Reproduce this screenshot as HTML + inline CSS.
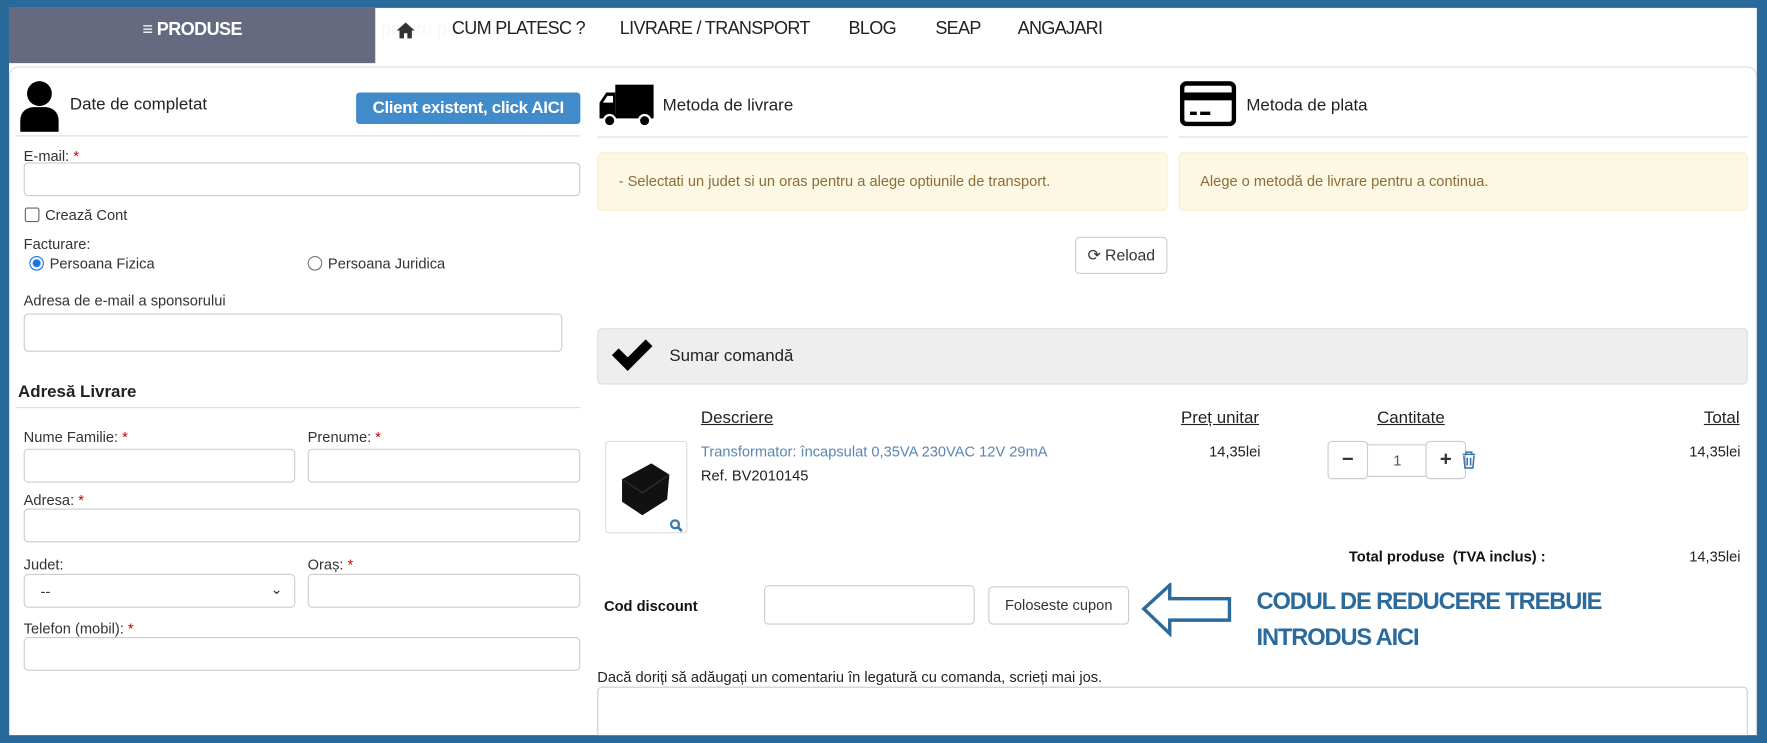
<!DOCTYPE html>
<html><head><meta charset="utf-8"><style>
*{box-sizing:border-box;margin:0;padding:0}
html,body{width:1767px;height:743px;overflow:hidden;background:#2a6a9b}
.root{position:absolute;left:0;top:0;width:1568px;height:659px;background:#2a6a9b;transform:scale(1.1269,1.1275);transform-origin:0 0;font-family:"Liberation Sans",Arial,sans-serif;font-size:13px;color:#333;overflow:hidden}
.in{position:absolute;left:8px;top:7px;width:1551px;height:645px;background:#fff;overflow:hidden}
.a{position:absolute}
.nav{font-size:16px;color:#222;letter-spacing:-0.6px}
.inp{position:absolute;border:1px solid #ccc;border-radius:4px;background:#fff;height:30px}
.lbl{position:absolute;font-size:13px;color:#333}
.req{color:#c00}
.hr{position:absolute;height:1px;background:#ddd}
.warn{position:absolute;background:#fcf8e3;border:1px solid #faebcc;border-radius:4px;color:#8a6d3b;font-size:13px;padding:0 18px}
.btn{position:absolute;border:1px solid #ccc;border-radius:4px;background:#fff;font-size:14px;color:#333;text-align:center}
u{text-decoration:underline}
</style></head><body><div class="root">
<div class="in">
 <div class="a" style="left:0;top:0;width:325px;height:49px;background:#656a80;color:#fff;font-size:16px;font-weight:bold;line-height:40px;text-align:center;letter-spacing:-0.5px">≡ PRODUSE</div>
 <div class="a" style="left:330px;top:11px;font-size:16px;color:#f6f6f6">pentru persoane</div>
 <svg class="a" style="left:343px;top:12px" width="18" height="16" viewBox="0 0 18 16"><path d="M9 1L1 8h2.5v7h4v-4.5h3V15h4V8H17z" fill="#333"/></svg>
 <div class="a nav" style="left:393px;top:10px">CUM PLATESC ?</div>
 <div class="a nav" style="left:542px;top:10px">LIVRARE / TRANSPORT</div>
 <div class="a nav" style="left:745px;top:10px">BLOG</div>
 <div class="a nav" style="left:822px;top:10px">SEAP</div>
 <div class="a nav" style="left:895px;top:10px">ANGAJARI</div>

 <div class="a" style="left:0;top:52px;width:1551px;height:620px;border:1px solid #ddd;border-radius:8px"></div>

 <svg class="a" style="left:8px;top:64px" width="38" height="46" viewBox="0 0 38 46"><circle cx="19" cy="12" r="11" fill="#000"/><path d="M2 46V36c0-8 6-12 12-12h10c6 0 12 4 12 12v10z" fill="#000"/></svg>
 <div class="a" style="left:54px;top:77px;font-size:15px;color:#222">Date de completat</div>
 <div class="a" style="left:308px;top:75px;width:199px;height:28px;background:#428bca;border-radius:3px;color:#fff;font-weight:bold;font-size:15px;line-height:28px;text-align:center;letter-spacing:-0.3px">Client existent, click AICI</div>
 <div class="hr" style="left:6px;top:113px;width:501px"></div>
 <div class="lbl" style="left:13px;top:124px">E-mail: <span class="req">*</span></div>
 <div class="inp" style="left:13px;top:137px;width:494px"></div>
 <div class="a" style="left:14px;top:177px;width:13px;height:13px;border:1px solid #666;border-radius:2px"></div>
 <div class="lbl" style="left:32px;top:176px">Crează Cont</div>
 <div class="lbl" style="left:13px;top:202px">Facturare:</div>
 <div class="a" style="left:18px;top:220px;width:13px;height:13px;border:1px solid #1a73e8;border-radius:50%;background:radial-gradient(#1a73e8 3px,#fff 4px)"></div>
 <div class="lbl" style="left:36px;top:219px">Persoana Fizica</div>
 <div class="a" style="left:265px;top:220px;width:13px;height:13px;border:1px solid #777;border-radius:50%"></div>
 <div class="lbl" style="left:283px;top:219px">Persoana Juridica</div>
 <div class="lbl" style="left:13px;top:252px">Adresa de e-mail a sponsorului</div>
 <div class="inp" style="left:13px;top:271px;width:478px;height:34px"></div>
 <div class="a" style="left:8px;top:332px;font-size:15px;font-weight:bold;color:#222">Adresă Livrare</div>
 <div class="hr" style="left:6px;top:354px;width:501px"></div>
 <div class="lbl" style="left:13px;top:373px">Nume Familie: <span class="req">*</span></div>
 <div class="inp" style="left:13px;top:391px;width:241px"></div>
 <div class="lbl" style="left:265px;top:373px">Prenume: <span class="req">*</span></div>
 <div class="inp" style="left:265px;top:391px;width:242px"></div>
 <div class="lbl" style="left:13px;top:429px">Adresa: <span class="req">*</span></div>
 <div class="inp" style="left:13px;top:444px;width:494px"></div>
 <div class="lbl" style="left:13px;top:486px">Judet:</div>
 <div class="inp" style="left:13px;top:502px;width:241px;padding:7px 14px;font-size:13px">--<span style="position:absolute;right:10px;top:5px">⌄</span></div>
 <div class="lbl" style="left:265px;top:486px">Oraș: <span class="req">*</span></div>
 <div class="inp" style="left:265px;top:502px;width:242px"></div>
 <div class="lbl" style="left:13px;top:543px">Telefon (mobil): <span class="req">*</span></div>
 <div class="inp" style="left:13px;top:558px;width:494px"></div>

 <svg class="a" style="left:524px;top:68px" width="50" height="38" viewBox="0 0 50 38"><rect x="14" y="0" width="34" height="27" fill="#000"/><path d="M0 27V16L6 7h8v20z" fill="#000"/><path d="M3 16L7 10h5v6z" fill="#fff"/><rect x="0" y="26" width="48" height="4" fill="#000"/><circle cx="9" cy="32" r="5" fill="#000" stroke="#fff" stroke-width="2"/><circle cx="40" cy="32" r="5" fill="#000" stroke="#fff" stroke-width="2"/></svg>
 <div class="a" style="left:580px;top:78px;font-size:15px;color:#222">Metoda de livrare</div>
 <div class="hr" style="left:522px;top:114px;width:506px"></div>
 <div class="warn" style="left:522px;top:128px;width:506px;height:52px;line-height:50px">- Selectati un judet si un oras pentru a alege optiunile de transport.</div>
 <svg class="a" style="left:1039px;top:65px" width="50" height="40" viewBox="0 0 50 40"><rect x="2" y="2" width="46" height="36" rx="4" fill="none" stroke="#000" stroke-width="4"/><rect x="2" y="10" width="46" height="7" fill="#000"/><rect x="9" y="27" width="6" height="3" fill="#000"/><rect x="18" y="27" width="9" height="3" fill="#000"/></svg>
 <div class="a" style="left:1098px;top:78px;font-size:15px;color:#222">Metoda de plata</div>
 <div class="hr" style="left:1038px;top:114px;width:505px"></div>
 <div class="warn" style="left:1038px;top:128px;width:505px;height:52px;line-height:50px">Alege o metodă de livrare pentru a continua.</div>
 <div class="btn" style="left:946px;top:203px;width:82px;height:33px;line-height:31px">⟳ Reload</div>

 <div class="a" style="left:522px;top:284px;width:1021px;height:50px;background:#eee;border:1px solid #ddd;border-radius:4px"></div>
 <svg class="a" style="left:533px;top:292px" width="40" height="32" viewBox="0 0 40 32"><path d="M2 16l6-6 8 8L32 2l6 6-22 22z" fill="#000"/></svg>
 <div class="a" style="left:586px;top:300px;font-size:15px;color:#222">Sumar comandă</div>

 <div class="a" style="left:614px;top:355px;font-size:15px;color:#222"><u>Descriere</u></div>
 <div class="a" style="left:1040px;top:355px;font-size:15px;color:#222"><u>Preț unitar</u></div>
 <div class="a" style="left:1214px;top:355px;font-size:15px;color:#222"><u>Cantitate</u></div>
 <div class="a" style="left:1504px;top:355px;font-size:15px;color:#222"><u>Total</u></div>
 <div class="a" style="left:529px;top:384px;width:73px;height:82px;border:1px solid #ddd;border-radius:3px"></div>
 <svg class="a" style="left:540px;top:398px" width="50" height="56" viewBox="0 0 50 56"><path d="M4 20L30 6l16 10-2 22-22 14-18-12z" fill="#111"/><path d="M4 20l18 12 24-16" fill="none" stroke="#333"/></svg>
 <svg class="a" style="left:586px;top:453px" width="12" height="12" viewBox="0 0 12 12"><circle cx="5" cy="5" r="3.5" fill="none" stroke="#3a77b0" stroke-width="2"/><path d="M7.5 7.5l3.5 3.5" stroke="#3a77b0" stroke-width="2.4"/></svg>
 <div class="a" style="left:614px;top:386px;color:#5a86b5;font-size:13px">Transformator: încapsulat 0,35VA 230VAC 12V 29mA</div>
 <div class="a" style="left:614px;top:407px;color:#222;font-size:13px">Ref. BV2010145</div>
 <div class="a" style="left:1065px;top:386px;color:#222">14,35lei</div>
 <div class="btn" style="left:1170px;top:384px;width:36px;height:34px;font-weight:bold;font-size:18px;line-height:31px">−</div>
 <div class="a" style="left:1206px;top:387px;width:52px;height:29px;border-top:1px solid #ccc;border-bottom:1px solid #ccc;text-align:center;line-height:28px;color:#555">1</div>
 <div class="btn" style="left:1257px;top:384px;width:36px;height:34px;font-weight:bold;font-size:18px;line-height:31px">+</div>
 <svg class="a" style="left:1289px;top:393px" width="13" height="16" viewBox="0 0 13 16"><path d="M1 3h11M4 3V1h5v2M2 4l1 11h7l1-11M5 6v7M8 6v7" fill="none" stroke="#3a77b0" stroke-width="1.4"/></svg>
 <div class="a" style="left:1491px;top:386px;color:#222">14,35lei</div>
 <div class="a" style="left:1189px;top:479px;font-weight:bold;color:#111">Total produse &nbsp;(TVA inclus) :</div>
 <div class="a" style="left:1491px;top:479px;color:#222">14,35lei</div>

 <div class="a" style="left:528px;top:523px;font-weight:bold;color:#111">Cod discount</div>
 <div class="inp" style="left:670px;top:512px;width:187px;height:35px"></div>
 <div class="btn" style="left:869px;top:513px;width:125px;height:34px;line-height:32px;font-size:13px">Foloseste cupon</div>
 <svg class="a" style="left:1004px;top:510px" width="82" height="48" viewBox="0 0 82 48"><path d="M3 23L26 2v12h53v19H26v12z" fill="none" stroke="#2b6a9b" stroke-width="3"/></svg>
 <div class="a" style="left:1107px;top:511px;color:#2b6a9b;font-weight:bold;font-size:21px;line-height:32px;letter-spacing:-1px">CODUL DE REDUCERE TREBUIE<br>INTRODUS AICI</div>

 <div class="a" style="left:522px;top:586px;color:#222">Dacă doriți să adăugați un comentariu în legatură cu comanda, scrieți mai jos.</div>
 <div class="inp" style="left:522px;top:602px;width:1021px;height:60px"></div>
</div>
</div></body></html>
